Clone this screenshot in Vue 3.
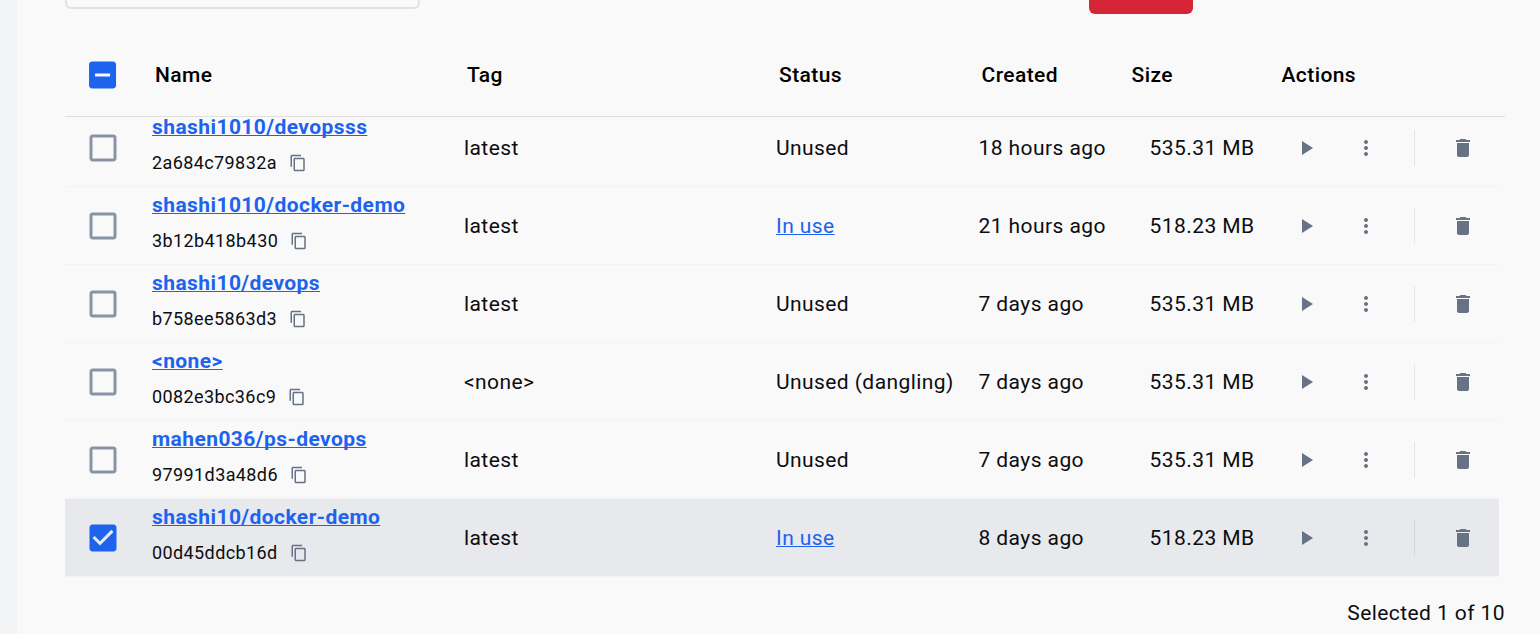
<script setup>
const rows = [
  { name: 'shashi1010/devopsss', id: '2a684c79832a', tag: 'latest', status: 'Unused', created: '18 hours ago', size: '535.31 MB' },
  { name: 'shashi1010/docker-demo', id: '3b12b418b430', tag: 'latest', status: 'In use', created: '21 hours ago', size: '518.23 MB' },
  { name: 'shashi10/devops', id: 'b758ee5863d3', tag: 'latest', status: 'Unused', created: '7 days ago', size: '535.31 MB' },
  { name: '<none>', id: '0082e3bc36c9', tag: '<none>', status: 'Unused (dangling)', created: '7 days ago', size: '535.31 MB' },
  { name: 'mahen036/ps-devops', id: '97991d3a48d6', tag: 'latest', status: 'Unused', created: '7 days ago', size: '535.31 MB' },
  { name: 'shashi10/docker-demo', id: '00d45ddcb16d', tag: 'latest', status: 'In use', created: '8 days ago', size: '518.23 MB', selected: true },
]
</script>

<template>
  <div class="app">
    <aside class="rail"></aside>
    <main class="main">
      <div class="toolbar">
        <div class="search"></div>
        <button class="delete" aria-label="Delete"></button>
      </div>

      <div class="grid head">
        <div class="check">
          <svg class="box on" viewBox="0.3 0 24 24"><path d="M19 3H5c-1.1 0-2 .9-2 2v14c0 1.1.9 2 2 2h14c1.1 0 2-.9 2-2V5c0-1.1-.9-2-2-2zm-2 10H7v-2h10v2z" /></svg>
        </div>
        <div>Name</div>
        <div>Tag</div>
        <div>Status</div>
        <div>Created</div>
        <div>Size</div>
        <div>Actions</div>
      </div>

      <div class="body">
        <div v-for="row in rows" :key="row.id" class="grid row" :class="{ selected: row.selected }">
          <div class="check">
            <svg v-if="row.selected" class="box on" viewBox="0 0 24 24"><path d="M19 3H5c-1.11 0-2 .9-2 2v14c0 1.1.89 2 2 2h14c1.11 0 2-.9 2-2V5c0-1.1-.89-2-2-2zm-9 14l-5-5 1.41-1.41L10 14.17l7.59-7.59L19 8l-9 9z" /></svg>
            <svg v-else class="box" viewBox="0 0 24 24"><path d="M19 5v14H5V5h14m0-2H5c-1.1 0-2 .9-2 2v14c0 1.1.9 2 2 2h14c1.1 0 2-.9 2-2V5c0-1.1-.9-2-2-2z" /></svg>
          </div>
          <div class="name">
            <a class="link title">{{ row.name }}</a>
            <div class="ident">
              <span>{{ row.id }}</span>
              <svg class="copy" viewBox="0 0 24 24"><path d="M16 1H4c-1.1 0-2 .9-2 2v14h2V3h12V1zm3 4H8c-1.1 0-2 .9-2 2v14c0 1.1.9 2 2 2h11c1.1 0 2-.9 2-2V7c0-1.1-.9-2-2-2zm0 16H8V7h11v14z" /></svg>
            </div>
          </div>
          <div>{{ row.tag }}</div>
          <div><a v-if="row.status === 'In use'" class="link">{{ row.status }}</a><span v-else>{{ row.status }}</span></div>
          <div>{{ row.created }}</div>
          <div class="size">{{ row.size }}</div>
          <div class="actions">
            <svg class="icon" viewBox="0 0 24 24"><path d="M8 5v14l11-7z" /></svg>
            <svg class="icon" viewBox="0 0 24 24"><path d="M12 8c1.1 0 2-.9 2-2s-.9-2-2-2-2 .9-2 2 .9 2 2 2zm0 2c-1.1 0-2 .9-2 2s.9 2 2 2 2-.9 2-2-.9-2-2-2zm0 6c-1.1 0-2 .9-2 2s.9 2 2 2 2-.9 2-2-.9-2-2-2z" /></svg>
            <span class="divider"></span>
            <svg class="icon" viewBox="0 0 24 24"><path d="M6 19c0 1.1.9 2 2 2h8c1.1 0 2-.9 2-2V7H6v12zM19 4h-3.5l-1-1h-5l-1 1H5v2h14V4z" /></svg>
          </div>
        </div>
      </div>

      <footer class="footer">Selected 1 of 10</footer>
    </main>
  </div>
</template>

<style>
body {
  background: #f9f9fa;
}
</style>

<style scoped>
.app {
  display: flex;
  width: 1540px;
  height: 634px;
  overflow: hidden;
  background: #f9f9fa;
  font-family: Roboto, sans-serif;
  font-size: 21px;
  line-height: 30px;
  letter-spacing: 0.42px;
  color: #0c0d10;
}
.rail {
  flex: none;
  width: 17px;
  background: #f3f4f6;
}
.main {
  flex: none;
  width: 1440px;
  padding-left: 48px;
}
.toolbar {
  display: flex;
  height: 33px;
}
.search {
  box-sizing: border-box;
  width: 355px;
  height: 9px;
  border: 2px solid #e1e2e6;
  border-top: 0;
  border-radius: 0 0 6px 6px;
}
.delete {
  width: 104px;
  height: 14px;
  margin-left: 669px;
  padding: 0;
  border: 0;
  border-radius: 0 0 6px 6px;
  background: #d62536;
}
.grid {
  display: grid;
  grid-template-columns: 75px 312px 312px 202.5px 150px 150px 1fr;
  align-items: center;
  box-sizing: border-box;
}
.grid > div {
  padding-left: 12px;
  white-space: nowrap;
}
.head {
  height: 84px;
  border-bottom: 1px solid #dedfe1;
  font-weight: 500;
  color: #000;
}
.head > div:not(.check) {
  padding-left: 15px;
}
.grid > .check {
  display: flex;
  padding-left: 20px;
}
.box {
  width: 36px;
  height: 36px;
  fill: #8993a5;
}
.box.on {
  fill: #1d63ed;
}
.body {
  width: 1434px;
  height: 460px;
  overflow: hidden;
}
.row {
  height: 78px;
  border-bottom: 1px solid #f2f3f5;
}
.row:first-child {
  margin-top: -8px;
}
.row.selected {
  background: #e8e9ed;
  background-clip: padding-box;
}
.link {
  color: #1d63ed;
  text-decoration: underline;
  text-decoration-thickness: 1px;
  text-underline-offset: 1px;
  text-decoration-skip-ink: none;
}
.name {
  padding-bottom: 6px;
}
.title {
  display: block;
  padding-top: 5px;
  line-height: 20px;
  font-weight: 700;
}
.ident {
  display: flex;
  align-items: center;
  margin-top: 11px;
  font-size: 18px;
  letter-spacing: 0.4px;
}
.copy {
  width: 18px;
  height: 18px;
  margin-left: 12px;
  fill: #677285;
}
.grid > .size {
  padding: 0;
  text-align: right;
  margin-right: 12px;
}
.actions {
  display: flex;
  align-items: center;
}
.grid > .actions {
  padding-left: 27px;
}
.icon {
  flex: none;
  width: 24px;
  height: 24px;
  fill: #677285;
}
.icon + .icon {
  margin-left: 36px;
}
.divider {
  width: 1px;
  height: 36px;
  margin: 0 36px;
  background: rgba(103, 114, 133, 0.15);
}
.footer {
  margin-top: 21px;
  text-align: right;
}
</style>
